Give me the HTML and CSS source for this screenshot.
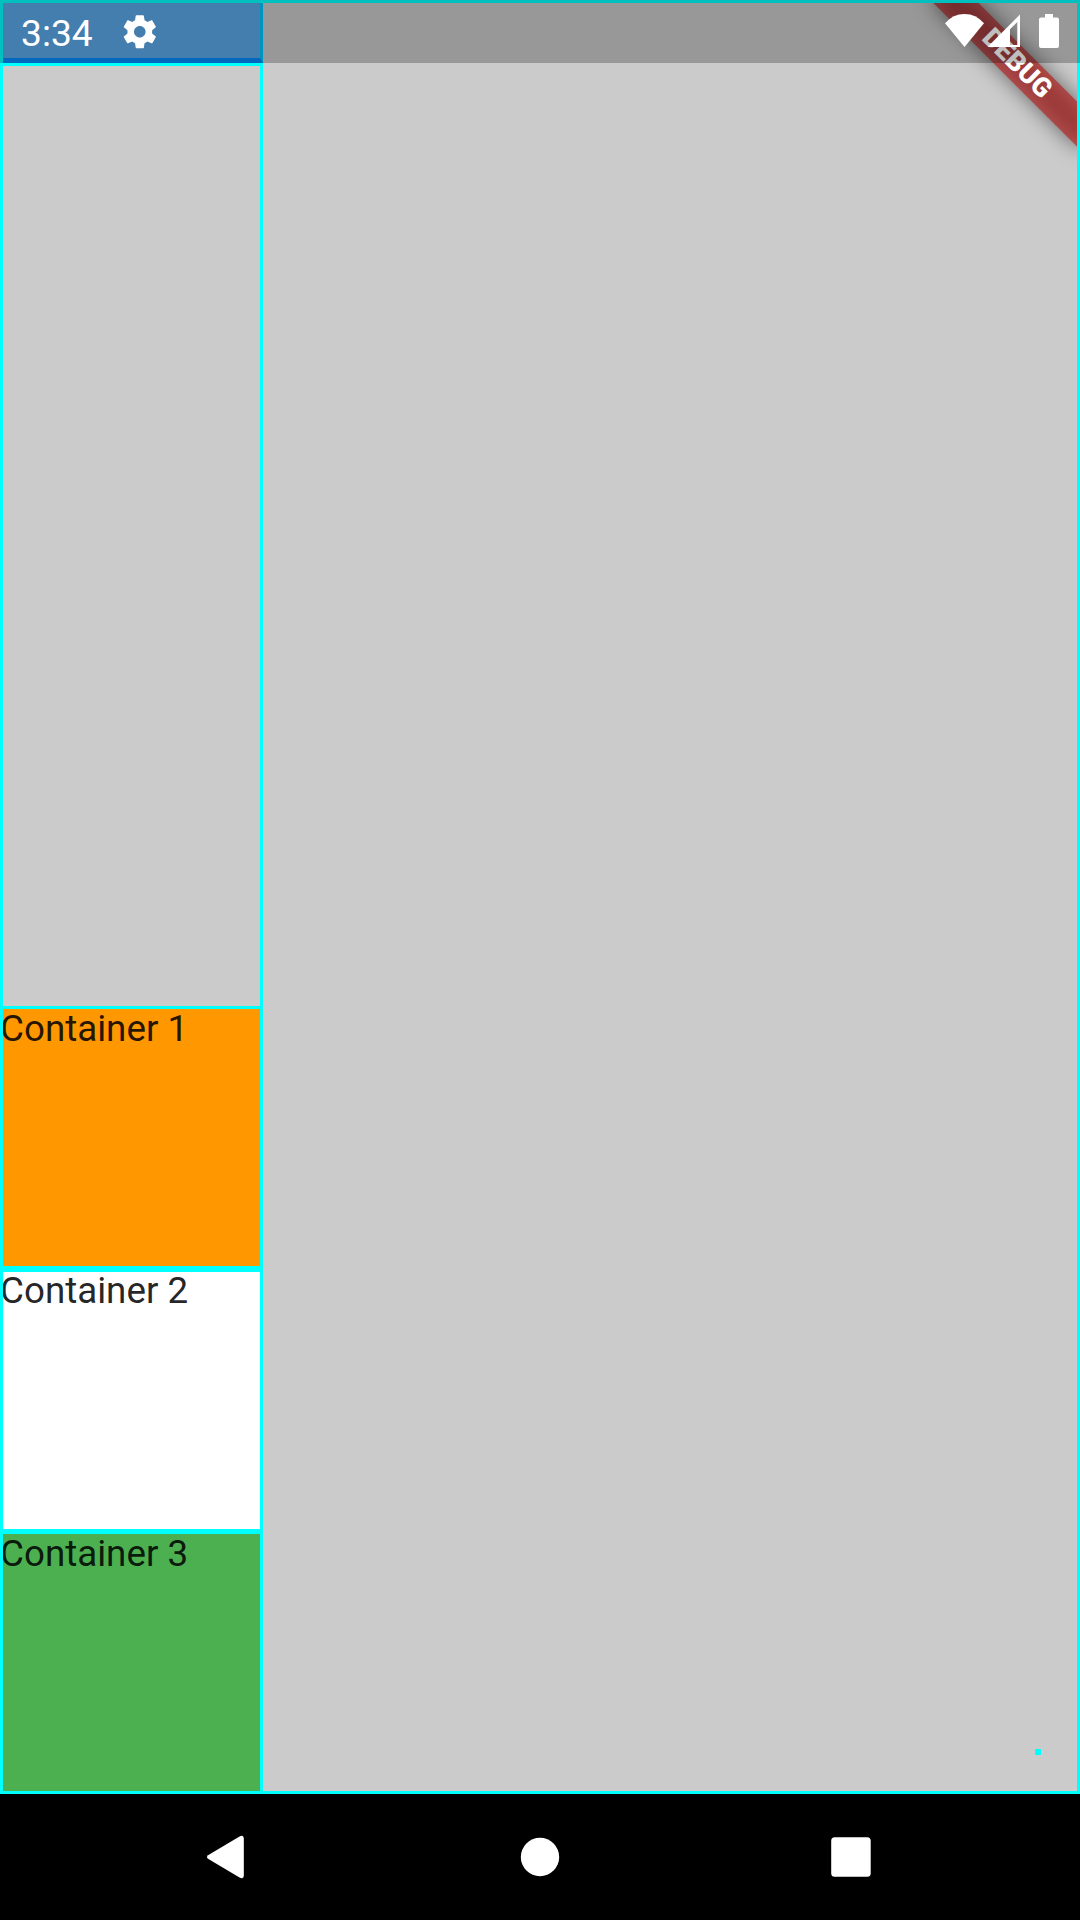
FILE: index.html
```html
<!DOCTYPE html>
<html lang="en">
<head>
<meta charset="utf-8">
<title>Containers</title>
<link rel="stylesheet" href="styles.css">
</head>
<body>
<div class="screen">
  <main class="app">
    <div class="column">
      <div class="header"></div>
      <div class="spacer"></div>
      <section class="box orange">Container 1</section>
      <section class="box white">Container 2</section>
      <section class="box green">Container 3</section>
    </div>
    <div class="banner-shadow"></div>
    <div class="banner">DEBUG</div>
    <div class="outline"></div>
    <div class="dot"></div>
    <header class="status">
      <span class="time">3:34</span>
      <svg class="gear" viewBox="0 0 24 24"><path d="M19.43 12.98c.04-.32.07-.64.07-.98s-.03-.66-.07-.98l2.11-1.65c.19-.15.24-.42.12-.64l-2-3.46c-.12-.22-.39-.3-.61-.22l-2.49 1c-.52-.4-1.08-.73-1.69-.98l-.38-2.65C14.46 2.18 14.25 2 14 2h-4c-.25 0-.46.18-.49.42l-.38 2.65c-.61.25-1.17.59-1.69.98l-2.49-1c-.23-.09-.49 0-.61.22l-2 3.46c-.13.22-.07.49.12.64l2.11 1.65c-.04.32-.07.65-.07.98s.03.66.07.98l-2.11 1.65c-.19.15-.24.42-.12.64l2 3.46c.12.22.39.3.61.22l2.49-1c.52.4 1.08.73 1.69.98l.38 2.65c.03.24.24.42.49.42h4c.25 0 .46-.18.49-.42l.38-2.65c.61-.25 1.17-.59 1.69-.98l2.49 1c.23.09.49 0 .61-.22l2-3.46c.12-.22.07-.49-.12-.64l-2.11-1.65zM12 15.5c-1.93 0-3.5-1.57-3.5-3.5s1.57-3.5 3.5-3.5 3.5 1.57 3.5 3.5-1.57 3.5-3.5 3.5z"/></svg>
      <svg class="signals" viewBox="940 0 140 63">
        <path d="M945 23.3Q953 14 964.5 14T984 23.3L964.500 47Z"/>
        <path fill-rule="evenodd" d="M987.5 47L1020 14.5V47ZM1010 29.3V45H1017.3V22Z"/>
        <path d="M1045 14h8v3.500h4q2 0 2 2V46q0 2-2 2h-16q-2 0-2-2V19.500q0-2 2-2h4z"/>
      </svg>
    </header>
  </main>
  <nav class="nav">
    <svg viewBox="0 0 1080 126">
      <path d="M208 61.200L239.500 42.500Q243.800 40.500 243.800 44.500V81.500Q243.800 85.500 239.500 83.500L208 64.800Q206 63 208 61.200Z"/>
      <circle cx="540" cy="63" r="19.200"/>
      <rect x="831.200" y="43.200" width="39.500" height="39.500" rx="3.500"/>
    </svg>
  </nav>
</div>
</body>
</html>
```
FILE: styles.css
```css
* { box-sizing: border-box; }
body { margin: 0; font-family: Roboto, sans-serif; }
.screen { width: 1080px; height: 1920px; display: flex; flex-direction: column; background: #000; }
.app { position: relative; flex: 1; overflow: hidden; background: #cbcbcb; display: flex; }
.column { width: 263px; display: flex; flex-direction: column; }
.header { height: 63px; background: #5ba9e8; border-right: 3px solid #00c4ff; border-bottom: 5px solid #008cff; }
.spacer { flex: 1; border: 3px solid #0ff; border-bottom: 0; }
.box { position: relative; height: 263px; padding-top: 1px; font-size: 36.75px; line-height: 43px; color: rgba(0, 0, 0, .87); white-space: nowrap; }
.box::after { content: ""; position: absolute; inset: 0; border: 3px solid #0ff; }
.orange { background: #ff9800; }
.white { height: 262px; padding-top: 0; background: #fff; }
.white::after { border-bottom: 2px solid #0ff; }
.green { background: #4caf50; }
.outline { position: absolute; inset: 0; border: 3px solid #0ff; }
.dot { position: absolute; right: 39px; bottom: 39px; width: 6px; height: 6px; background: #0ff; }

/* Corner ribbon, rotated about the top right corner */
.banner, .banner-shadow { position: absolute; left: 975px; top: 73.5px; width: 210px; height: 31.5px; transform-origin: 105px -73.5px; transform: rotate(45deg); }
.banner-shadow { background: rgba(0, 0, 0, .5); filter: blur(10.4px); }
.banner { background: rgba(183, 28, 28, .63); color: #fff; font-size: 26.8px; font-weight: 900; line-height: 31.5px; text-align: center; }

.status { position: absolute; inset: 0 0 auto; height: 63px; padding-left: 21px; display: flex; align-items: center; background: rgba(0, 0, 0, .25); color: #fff; }
.status svg { fill: #fff; }
.time { width: 71px; font-size: 37.2px; line-height: 43px; margin-top: 3px; }
.gear { width: 39.6px; height: 39.6px; margin-left: 28px; }
.signals { width: 140px; height: 63px; margin-left: auto; }
.nav { height: 126px; background: #000; }
.nav svg { display: block; width: 1080px; height: 126px; fill: #fff; }
```
